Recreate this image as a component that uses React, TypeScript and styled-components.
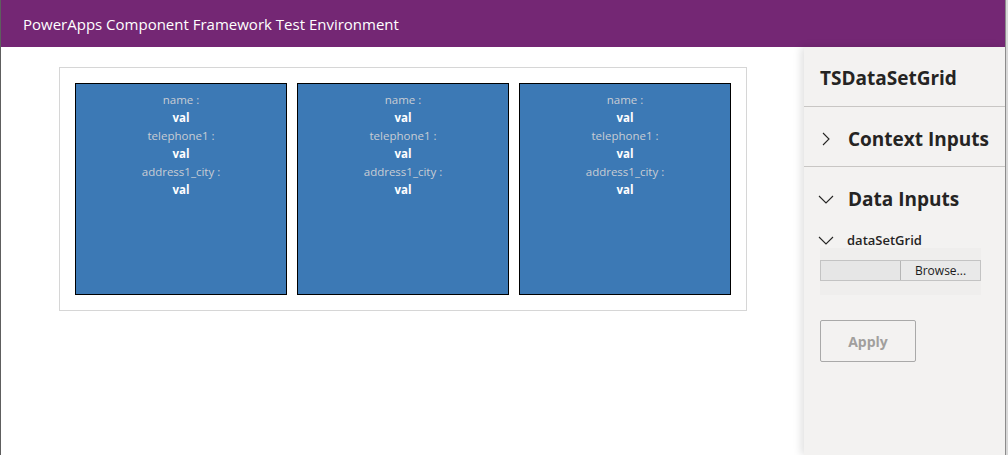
import React from 'react';
import styled, { createGlobalStyle } from 'styled-components';

const GlobalStyle = createGlobalStyle`
  html, body {
    margin: 0;
    padding: 0;
    height: 100%;
    background: #ffffff;
  }
  #root {
    height: 100%;
  }
`;

const Frame = styled.div`
  display: flex;
  width: 1008px;
  height: 455px;
  overflow: hidden;
  border-left: 1px solid #5e5e5e;
  box-sizing: border-box;
  font-family: 'Segoe UI', 'Open Sans', 'Noto Sans', sans-serif;
`;

const Window = styled.div`
  width: 1004px;
  display: flex;
  flex-direction: column;
`;

const WindowEdge = styled.div`
  width: 3px;
  background: linear-gradient(to right, #8c8c8c 0, #8c8c8c 1px, #d8d8d8 1px);
`;

const Header = styled.header`
  height: 47px;
  flex-shrink: 0;
  background: #742774;
  color: #ffffff;
  display: flex;
  align-items: center;
  padding-left: 22px;
  font-size: 15px;
`;

const Body = styled.div`
  flex: 1;
  display: flex;
  min-height: 0;
`;

const Main = styled.main`
  flex: 1;
  padding: 20px 0 0 58px;
`;

const GridBox = styled.div`
  display: inline-flex;
  gap: 10px;
  padding: 15px;
  border: 1px solid #d6d6d6;
`;

const Card = styled.div`
  width: 212px;
  height: 212px;
  border: 1px solid #000000;
  background: #3c79b5;
  padding-top: 7px;
  box-sizing: border-box;
  display: flex;
  flex-direction: column;
  align-items: center;
  font-size: 11.5px;
  line-height: 18px;
`;

const Label = styled.div`
  color: #c9cdd4;
`;

const Value = styled.div`
  color: #ffffff;
  font-weight: 700;
`;

const Panel = styled.aside`
  width: 201px;
  background: #f3f2f1;
  box-shadow: -3px 0 8px rgba(0, 0, 0, 0.12);
  display: flex;
  flex-direction: column;
  color: #252423;
`;

const PanelTitle = styled.div`
  height: 60px;
  box-sizing: border-box;
  padding: 3px 0 0 16px;
  display: flex;
  align-items: center;
  font-size: 19px;
  font-weight: 700;
  border-bottom: 1px solid #c8c6c4;
`;

const Section = styled.div<{ $divider?: boolean }>`
  height: 60px;
  box-sizing: border-box;
  padding-top: 4px;
  display: flex;
  align-items: center;
  font-size: 19px;
  font-weight: 700;
  border-bottom: ${(p) => (p.$divider ? '1px solid #c8c6c4' : 'none')};
`;

const ChevronSlot = styled.span`
  width: 44px;
  display: flex;
  justify-content: center;
`;

const SubRow = styled.div`
  display: flex;
  align-items: center;
  height: 16px;
  margin-top: 5px;
  font-size: 13px;
  font-weight: 600;
`;

const SubChevron = styled.span`
  width: 43px;
  display: flex;
  justify-content: center;
`;

const FileArea = styled.div`
  margin-left: 16px;
  width: 161px;
  height: 47px;
  background: #efeeed;
  padding-top: 12px;
  box-sizing: border-box;
`;

const FileInput = styled.div`
  display: flex;
  height: 21px;
  width: 161px;
  border: 1px solid #c3c3c3;
  box-sizing: border-box;
  background: #e6e6e6;
`;

const FileName = styled.div`
  flex: 1;
`;

const BrowseButton = styled.div`
  width: 79px;
  border-left: 1px solid #b5b5b5;
  background: #e9e9e9;
  font-size: 12px;
  color: #1b1b1b;
  display: flex;
  align-items: center;
  justify-content: center;
  line-height: 1;
`;

const ApplyButton = styled.button`
  margin: 25px 0 0 16px;
  width: 96px;
  height: 42px;
  border: 1px solid #a9a9a9;
  border-radius: 2px;
  background: #f3f2f1;
  color: #a19f9d;
  font-family: inherit;
  font-size: 14px;
  font-weight: 700;
`;

const ChevronRight = () => (
  <svg width="8" height="14" viewBox="0 0 8 14">
    <polyline points="1,1 7,7 1,13" fill="none" stroke="#252423" strokeWidth="1.1" />
  </svg>
);

const ChevronDown = () => (
  <svg width="16" height="9" viewBox="0 0 16 9">
    <polyline points="1,1 8,8 15,1" fill="none" stroke="#252423" strokeWidth="1.1" />
  </svg>
);

const fields = ['name', 'telephone1', 'address1_city'];

export default function App() {
  return (
    <>
      <GlobalStyle />
      <Frame>
        <Window>
          <Header>PowerApps Component Framework Test Environment</Header>
          <Body>
            <Main>
              <GridBox>
                {[0, 1, 2].map((i) => (
                  <Card key={i}>
                    {fields.map((f) => (
                      <React.Fragment key={f}>
                        <Label>{f} :</Label>
                        <Value>val</Value>
                      </React.Fragment>
                    ))}
                  </Card>
                ))}
              </GridBox>
            </Main>
            <Panel>
              <PanelTitle>TSDataSetGrid</PanelTitle>
              <Section $divider>
                <ChevronSlot>
                  <ChevronRight />
                </ChevronSlot>
                Context Inputs
              </Section>
              <Section>
                <ChevronSlot>
                  <ChevronDown />
                </ChevronSlot>
                Data Inputs
              </Section>
              <SubRow>
                <SubChevron>
                  <ChevronDown />
                </SubChevron>
                dataSetGrid
              </SubRow>
              <FileArea>
                <FileInput>
                  <FileName />
                  <BrowseButton>Browse...</BrowseButton>
                </FileInput>
              </FileArea>
              <ApplyButton disabled>Apply</ApplyButton>
            </Panel>
          </Body>
        </Window>
        <WindowEdge />
      </Frame>
    </>
  );
}
